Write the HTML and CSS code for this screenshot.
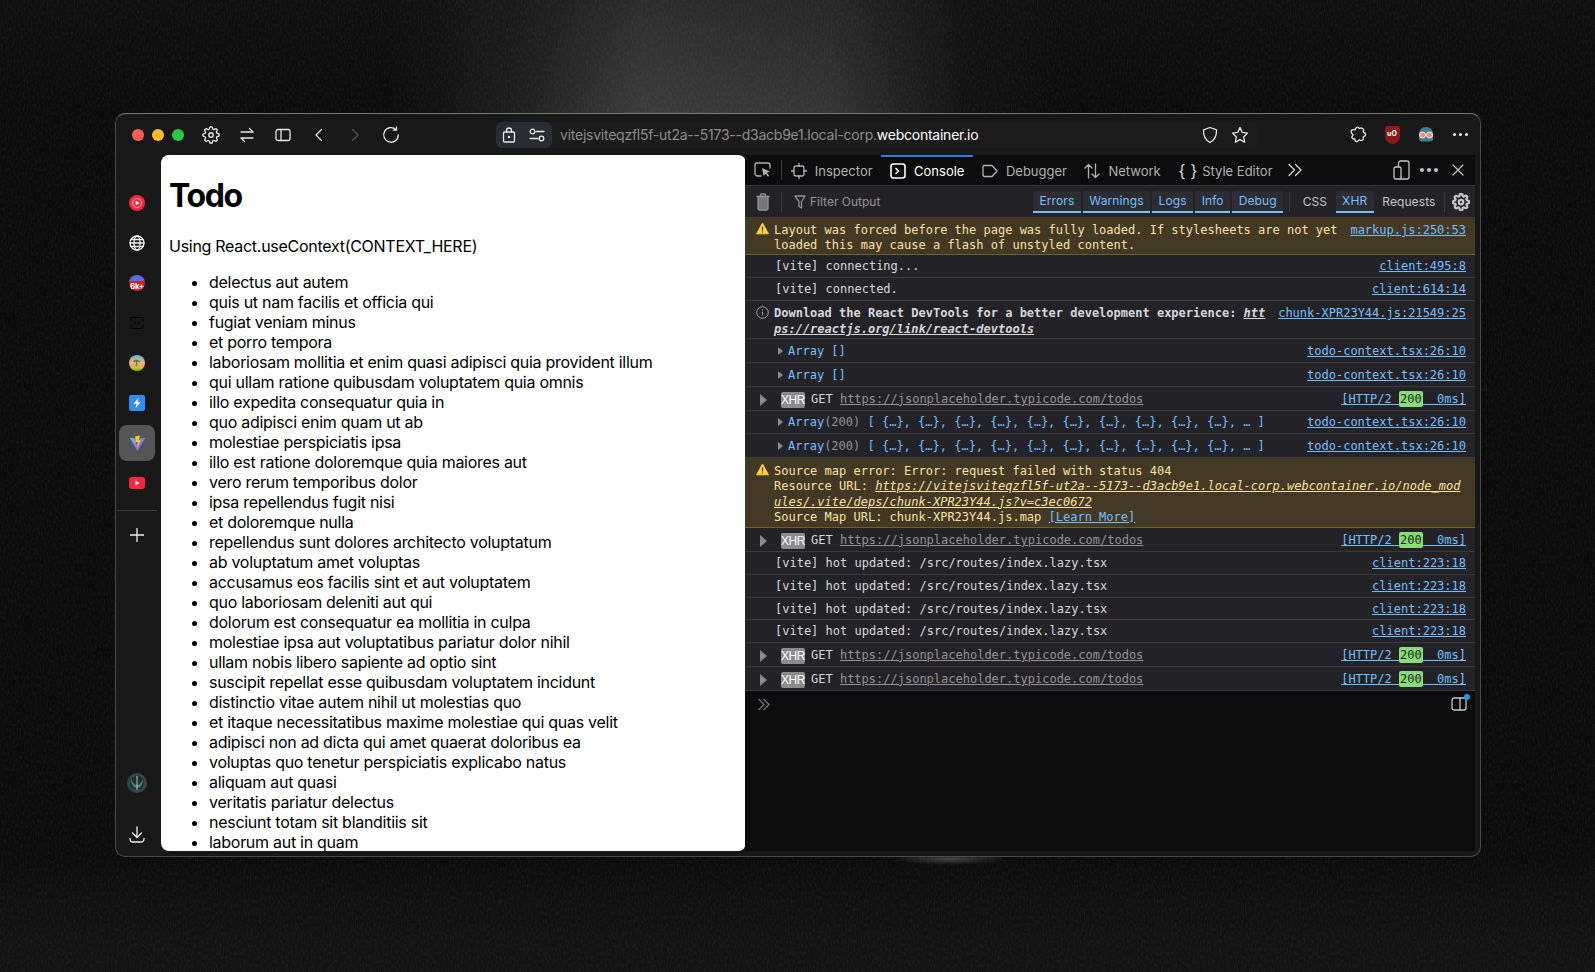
FILE: index.html
```html
<!DOCTYPE html>
<html lang="en">
<head>
    <meta charset="UTF-8">
    <title>Todo</title>
    <link rel="stylesheet" href="styles.css">
</head>
<body>
    <svg class="grain" width="1595" height="972" aria-hidden="true">
        <filter id="grain-noise">
            <feTurbulence type="fractalNoise" baseFrequency="0.7 0.25" numOctaves="2" seed="4"/>
            <feColorMatrix values="0 0 0 0 1  0 0 0 0 1  0 0 0 0 1  0 0 0 1.4 -0.55"/>
        </filter>
        <rect width="1595" height="972" filter="url(#grain-noise)"/>
    </svg>

    <svg class="sprite" width="0" height="0" aria-hidden="true">
        <symbol id="i-gear" viewBox="0 0 24 24"><circle cx="12" cy="12" r="3"/><path d="M19.4 15a1.65 1.65 0 0 0 .33 1.82l.06.06a2 2 0 0 1 0 2.83 2 2 0 0 1-2.83 0l-.06-.06a1.65 1.65 0 0 0-1.82-.33 1.65 1.65 0 0 0-1 1.51V21a2 2 0 0 1-2 2 2 2 0 0 1-2-2v-.09A1.65 1.65 0 0 0 9 19.4a1.65 1.65 0 0 0-1.82.33l-.06.06a2 2 0 0 1-2.83 0 2 2 0 0 1 0-2.83l.06-.06a1.65 1.65 0 0 0 .33-1.82 1.65 1.65 0 0 0-1.51-1H3a2 2 0 0 1-2-2 2 2 0 0 1 2-2h.09A1.65 1.65 0 0 0 4.6 9a1.65 1.65 0 0 0-.33-1.82l-.06-.06a2 2 0 0 1 0-2.83 2 2 0 0 1 2.83 0l.06.06a1.65 1.65 0 0 0 1.82.33H9a1.65 1.65 0 0 0 1-1.51V3a2 2 0 0 1 2-2 2 2 0 0 1 2 2v.09a1.65 1.65 0 0 0 1 1.51 1.65 1.65 0 0 0 1.82-.33l.06-.06a2 2 0 0 1 2.83 0 2 2 0 0 1 0 2.83l-.06.06a1.65 1.65 0 0 0-.33 1.82V9a1.65 1.65 0 0 0 1.51 1H21a2 2 0 0 1 2 2 2 2 0 0 1-2 2h-.09a1.65 1.65 0 0 0-1.51 1z"/></symbol>
        <symbol id="i-warn" viewBox="0 0 16 16"><path d="M8 1.2 15.4 14.6H.6z" fill="#ffd43b" stroke="#ffd43b" stroke-linejoin="round"/><path d="M8 5.5v5M8 11.8v1.2" stroke="#3a2f10" stroke-width="1.5"/></symbol>
    </svg>

    <div class="window">
        <header class="titlebar">
            <div class="lights">
                <span class="light light-red"></span>
                <span class="light light-yellow"></span>
                <span class="light light-green"></span>
            </div>
            <div class="nav-icons">
                <span class="nav-icon"><svg class="line gear-thin" width="18" height="18" viewBox="0 0 24 24"><use href="#i-gear"/></svg></span>
                <span class="nav-icon"><svg class="line" width="16" height="16" viewBox="0 0 16 16"><path d="M2 5h12M10.5 1.500 14 5M14 11H2M5.500 14.500 2 11"/></svg></span>
                <span class="nav-icon"><svg class="line" width="16" height="14" viewBox="0 0 16 14"><rect x="1" y="1.500" width="14" height="11" rx="2"/><path d="M6 1.500v11"/></svg></span>
                <span class="nav-icon"><svg class="line" width="10" height="14" viewBox="0 0 10 14"><path d="M7.500 1.500 2 7l5.500 5.500"/></svg></span>
                <span class="nav-icon nav-icon-off"><svg class="line" width="10" height="14" viewBox="0 0 10 14"><path d="M2.500 1.500 8 7l-5.500 5.500"/></svg></span>
                <span class="nav-icon"><svg class="line" width="18" height="18" viewBox="0 0 18 18"><path d="M14 3.600A7.300 7.300 0 1 0 16.300 9M14.500 1v3.200h-3.200"/></svg></span>
            </div>
            <div class="urlbar">
                <div class="url-pill">
                    <svg class="line" width="14" height="16" viewBox="0 0 14 16"><rect x="1.500" y="5" width="11" height="10" rx="1"/><path d="M4.500 5V3.500a2.500 2.500 0 0 1 5 0V5"/><circle cx="7" cy="10" r=".6"/></svg>
                    <svg class="line" width="16" height="14" viewBox="0 0 16 14"><circle cx="3.500" cy="3.500" r="2.300"/><path d="M7 3.500h8M1 10.500h8"/><circle cx="12.500" cy="10.500" r="2.300"/></svg>
                </div>
                <div class="url-text">vitejsviteqzfl5f-ut2a--5173--d3acb9e1.local-corp.<span class="url-domain">webcontainer.io</span></div>
                <svg class="line url-shield" width="16" height="18" viewBox="0 0 16 18"><path d="M8 1.500 14.500 3.800c.3 5.600-1.500 10-6.500 12.700C3 13.800 1.200 9.400 1.500 3.800z"/></svg>
                <svg class="line url-star" width="18" height="18" viewBox="0 0 18 18"><path d="m9 1.500 2.300 4.900 5.200.7-3.800 3.700.9 5.400L9 13.600l-4.600 2.600.9-5.400-3.800-3.700 5.200-.7z"/></svg>
            </div>
            <div class="ext-icons">
                <span class="ext-icon"><svg class="line" width="17" height="17" viewBox="0 0 17 17"><path d="M6.500 1.500c.9-.8 2.500-.2 2.700 1 1.500-.7 3.500-.2 4.300.9.300 1-.3 1.700-.3 2.500 1.300.5 2.300 1.500 2.300 2.700s-1.100 2-2.300 2.200c.2 1.200.2 2.600-.8 3.500-1.100.6-2.300.2-3.300-.5-.6 1.300-2.300 2.200-3.500 1.400-.7-.5-.6-1.500-.7-2.200-1.300.1-2.700-.4-3-1.500-.2-1 .5-1.700 1.200-2.500C1.500 7.600.7 6.200 1.300 4.800c.6-1.200 2.300-1.200 3.500-1z"/></svg></span>
                <span class="ext-icon">
                    <span class="ublock">uO</span>
                </span>
                <span class="ext-icon"><svg width="18" height="18" viewBox="0 0 18 18"><path d="M9 1c4.500 0 7 3.200 7 7v6l-2 1.500H4L2 14V8c0-3.800 2.500-7 7-7z" fill="#3f7f8f"/><circle cx="5.500" cy="9" r="3" fill="#f0907a" stroke="#f4f0e8"/><circle cx="12.500" cy="9" r="3" fill="#f0907a" stroke="#f4f0e8"/></svg></span>
                <span class="ext-icon"><span class="dots"><i></i><i></i><i></i></span></span>
            </div>
        </header>

        <div class="main">
            <nav class="sidebar">
                <span class="side-item"><svg width="16" height="16" viewBox="0 0 16 16"><circle cx="8" cy="8" r="8" fill="#f6263d"/><circle cx="8" cy="8" r="4.500" fill="none" stroke="#ffc4cb" stroke-width=".8"/><path d="M6.700 5.800 10.500 8l-3.800 2.200z" fill="#fff"/></svg></span>
                <span class="side-item"><svg class="line" width="16" height="16" viewBox="0 0 16 16"><circle cx="8" cy="8" r="7"/><ellipse cx="8" cy="8" rx="3" ry="7"/><path d="M1 8h14M2 4.500h12M2 11.500h12"/></svg></span>
                <span class="side-item"><span class="count-badge"><span class="count-text">6k+</span></span></span>
                <span class="side-item"><svg class="line line-black" width="16" height="14" viewBox="0 0 16 14"><path d="M2 5V3a1.500 1.500 0 0 1 1.500-1.500h9A1.500 1.500 0 0 1 14 3v2M2 9v2a1.500 1.500 0 0 0 1.500 1.500h9A1.500 1.500 0 0 0 14 11V9M6 5.500v3M10 5.500v3"/></svg></span>
                <span class="side-item"><svg width="16" height="16" viewBox="0 0 16 16"><defs><linearGradient id="beach" x1="0" y1="0" x2="0" y2="1"><stop offset="0" stop-color="#5fb8d8"/><stop offset=".5" stop-color="#f6b27a"/><stop offset=".72" stop-color="#f0a060"/><stop offset=".78" stop-color="#c8d020"/><stop offset="1" stop-color="#7fae10"/></linearGradient></defs><circle cx="8" cy="8" r="8" fill="url(#beach)"/><path d="M7.500 11V6M4.500 7c1.500-2 4.500-2 6.500 0" stroke="#3f8a3a" stroke-width="1.300" fill="none"/></svg></span>
                <span class="side-item"><svg width="16" height="16" viewBox="0 0 16 16"><rect width="16" height="16" rx="2" fill="#2f8cf5"/><path d="M9.500 2.500 4.500 9h3l-1 4.500 5-6.500h-3z" fill="#fff"/></svg></span>
                <span class="side-item side-item-active"><svg width="17" height="17" viewBox="0 0 18 18"><defs><linearGradient id="vite-v" x1="0" y1="0" x2="1" y2="1"><stop offset="0" stop-color="#41d1ff"/><stop offset="1" stop-color="#bd34fe"/></linearGradient></defs><path d="M.8 3 9 17 17.200 3 12 3.800 9 13 6 3.800z" fill="url(#vite-v)"/><path d="M6.500 1.500 11.500 .5l-.8 5 1.800-.4L8.500 14l.5-6.500-2 .4z" fill="#ffc517"/></svg></span>
                <span class="side-item"><svg width="16" height="12" viewBox="0 0 16 12"><rect width="16" height="12" rx="3" fill="#f6263d"/><path d="M6.500 3.500 10.500 6l-4 2.500z" fill="#fff"/></svg></span>
                <div class="side-rule"></div>
                <span class="side-item side-add"><svg class="line" width="14" height="14" viewBox="0 0 14 14"><path d="M7 0v14M0 7h14"/></svg></span>
                <span class="side-item side-user"><svg width="20" height="20" viewBox="0 0 20 20"><circle cx="10" cy="10" r="10" fill="#33474a"/><circle cx="10" cy="10" r="7" fill="#1f2f33"/><path d="M4 6c2 4 4 6 6 6s4-2 6-6c0 6-3 9-6 9s-6-3-6-9z" fill="#4d7f78"/><path d="M10 3v14" stroke="#b4c4c2"/></svg></span>
                <span class="side-item side-download"><svg class="line" width="16" height="18" viewBox="0 0 16 18"><path d="M8 1v10M3.500 7 8 11.500 12.500 7M1 12.500c0 2 1 3.500 3 3.500h8c2 0 3-1.500 3-3.500"/></svg></span>
            </nav>

            <section class="page">
                <h1>Todo</h1>
                <p>Using React.useContext(CONTEXT_HERE)</p>
                <ul>
                    <li>delectus aut autem</li>
                    <li>quis ut nam facilis et officia qui</li>
                    <li>fugiat veniam minus</li>
                    <li>et porro tempora</li>
                    <li>laboriosam mollitia et enim quasi adipisci quia provident illum</li>
                    <li>qui ullam ratione quibusdam voluptatem quia omnis</li>
                    <li>illo expedita consequatur quia in</li>
                    <li>quo adipisci enim quam ut ab</li>
                    <li>molestiae perspiciatis ipsa</li>
                    <li>illo est ratione doloremque quia maiores aut</li>
                    <li>vero rerum temporibus dolor</li>
                    <li>ipsa repellendus fugit nisi</li>
                    <li>et doloremque nulla</li>
                    <li>repellendus sunt dolores architecto voluptatum</li>
                    <li>ab voluptatum amet voluptas</li>
                    <li>accusamus eos facilis sint et aut voluptatem</li>
                    <li>quo laboriosam deleniti aut qui</li>
                    <li>dolorum est consequatur ea mollitia in culpa</li>
                    <li>molestiae ipsa aut voluptatibus pariatur dolor nihil</li>
                    <li>ullam nobis libero sapiente ad optio sint</li>
                    <li>suscipit repellat esse quibusdam voluptatem incidunt</li>
                    <li>distinctio vitae autem nihil ut molestias quo</li>
                    <li>et itaque necessitatibus maxime molestiae qui quas velit</li>
                    <li>adipisci non ad dicta qui amet quaerat doloribus ea</li>
                    <li>voluptas quo tenetur perspiciatis explicabo natus</li>
                    <li>aliquam aut quasi</li>
                    <li>veritatis pariatur delectus</li>
                    <li>nesciunt totam sit blanditiis sit</li>
                    <li>laborum aut in quam</li>
                </ul>
            </section>

            <section class="devtools">
                <div class="tabs">
                    <span class="tool-btn"><svg class="line" width="18" height="16" viewBox="0 0 18 16"><path d="M7 14H3a2 2 0 0 1-2-2V3a2 2 0 0 1 2-2h11a2 2 0 0 1 2 2v3"/><path class="fill" d="m8 6 8 3.500-3.200 1.200 2.400 3-1.300 1-2.300-3L9.500 14z"/></svg></span>
                    <span class="tool-sep"></span>
                    <span class="tab"><svg class="line" width="16" height="16" viewBox="0 0 16 16"><rect x="3" y="3" width="10" height="10" rx="2"/><path d="M8 0v3M8 13v3M0 8h3M13 8h3"/></svg>Inspector</span>
                    <span class="tab tab-active"><svg class="line line-bold" width="16" height="16" viewBox="0 0 16 16"><rect x="1" y="1" width="14" height="14" rx="2.500"/><path d="m6 5.500 2.500 2.500L6 10.500"/></svg>Console</span>
                    <span class="tab"><svg class="line" width="16" height="14" viewBox="0 0 16 14"><path d="M2.500 1.500h7.500L15 7l-5 5.500H2.500a1.500 1.500 0 0 1-1.500-1.500V3a1.500 1.500 0 0 1 1.500-1.500z"/></svg>Debugger</span>
                    <span class="tab"><svg class="line" width="16" height="16" viewBox="0 0 16 16"><path d="M4.500 15V1.500M1 5l3.500-3.500L8 5M11.500 1v13.500M8 11l3.500 3.500L15 11"/></svg>Network</span>
                    <span class="tab"><span class="braces">{ }</span>Style Editor</span>
                    <svg class="line tab-more" width="16" height="14" viewBox="0 0 16 14"><path d="m2 1.500 5.500 5.500L2 12.500M8.500 1.500 14 7l-5.500 5.500"/></svg>
                    <span class="tabs-right">
                        <svg class="line device-icon" width="17" height="20" viewBox="0 0 17 20"><rect x="5.500" y="1" width="10.500" height="18" rx="2"/><rect x="1" y="7" width="7" height="12" rx="1.500" fill="#0c0c0d"/></svg>
                        <span class="dots dots-dim"><i></i><i></i><i></i></span>
                        <svg class="line" width="12" height="12" viewBox="0 0 12 12"><path d="m1 1 10 10M11 1 1 11"/></svg>
                    </span>
                </div>

                <div class="filters">
                    <span class="tool-btn"><svg class="line" width="14" height="18" viewBox="0 0 14 18"><path d="M1 3.500h12M4.500 3.500V2a1 1 0 0 1 1-1h3a1 1 0 0 1 1 1v1.500"/><rect x="2" y="3.500" width="10" height="13.500" rx="1.500" fill="#77777b"/></svg></span>
                    <span class="tool-sep"></span>
                    <span class="filter-input"><svg class="line" width="12" height="14" viewBox="0 0 12 14"><path d="M1 1h10L7.500 6.500V13L5 11.500v-5z"/></svg>Filter Output</span>
                    <span class="filter-group">
                        <span class="pill pill-on">Errors</span>
                        <span class="pill pill-on">Warnings</span>
                        <span class="pill pill-on">Logs</span>
                        <span class="pill pill-on">Info</span>
                        <span class="pill pill-on">Debug</span>
                        <span class="tool-sep pill-sep"></span>
                        <span class="pill">CSS</span>
                        <span class="pill pill-on">XHR</span>
                        <span class="pill">Requests</span>
                        <span class="tool-sep"></span>
                        <svg class="gear" width="18" height="18" viewBox="0 0 24 24"><use href="#i-gear"/></svg>
                    </span>
                </div>

                <div class="log">
                    <div class="row row-warn">
                        <svg class="row-icon" width="13" height="13"><use href="#i-warn"/></svg>
                        <div class="msg">Layout was forced before the page was fully loaded. If stylesheets are not yet<br>loaded this may cause a flash of unstyled content.</div>
                        <a class="src">markup.js:250:53</a>
                    </div>
                    <div class="row"><div class="msg">[vite] connecting...</div><a class="src">client:495:8</a></div>
                    <div class="row"><div class="msg">[vite] connected.</div><a class="src">client:614:14</a></div>
                    <div class="row row-info">
                        <svg class="row-icon" width="13" height="13" viewBox="0 0 13 13"><circle cx="6.500" cy="6.500" r="5.800" fill="none" stroke="#a0a0a4"/><path d="M6.500 5.500v4M6.500 3.200v1.200" stroke="#a0a0a4"/></svg>
                        <div class="msg msg-strong">Download the React DevTools for a better development experience: <em>htt<br>ps://reactjs.org/link/react-devtools</em></div>
                        <a class="src">chunk-XPR23Y44.js:21549:25</a>
                    </div>
                    <div class="row row-tall"><div class="msg"><span class="tri"></span><span class="blue">Array []</span></div><a class="src">todo-context.tsx:26:10</a></div>
                    <div class="row row-tall"><div class="msg"><span class="tri"></span><span class="blue">Array []</span></div><a class="src">todo-context.tsx:26:10</a></div>
                    <div class="row row-tall row-xhr">
                        <span class="tri tri-big"></span><span class="xhr-badge">XHR</span><span class="msg">GET <a class="xhr-url">https://jsonplaceholder.typicode.com/todos</a></span>
                        <a class="src">[HTTP/2 <span class="ok">200</span>  0ms]</a>
                    </div>
                    <div class="row"><div class="msg"><span class="tri"></span><span class="blue">Array</span><span class="dim">(200)</span> <span class="blue">[ {…}, {…}, {…}, {…}, {…}, {…}, {…}, {…}, {…}, {…}, … ]</span></div><a class="src">todo-context.tsx:26:10</a></div>
                    <div class="row row-tall"><div class="msg"><span class="tri"></span><span class="blue">Array</span><span class="dim">(200)</span> <span class="blue">[ {…}, {…}, {…}, {…}, {…}, {…}, {…}, {…}, {…}, {…}, … ]</span></div><a class="src">todo-context.tsx:26:10</a></div>
                    <div class="row row-warn row-map">
                        <svg class="row-icon" width="13" height="13"><use href="#i-warn"/></svg>
                        <div class="msg">Source map error: Error: request failed with status 404<br>Resource URL: <em class="warn-link">https://vitejsviteqzfl5f-ut2a--5173--d3acb9e1.local-corp.webcontainer.io/node_mod<br>ules/.vite/deps/chunk-XPR23Y44.js?v=c3ec0672</em><br>Source Map URL: chunk-XPR23Y44.js.map <a class="learn">[Learn More]</a></div>
                    </div>
                    <div class="row row-tall row-xhr">
                        <span class="tri tri-big"></span><span class="xhr-badge">XHR</span><span class="msg">GET <a class="xhr-url">https://jsonplaceholder.typicode.com/todos</a></span>
                        <a class="src">[HTTP/2 <span class="ok">200</span>  0ms]</a>
                    </div>
                    <div class="row row-hot"><div class="msg">[vite] hot updated: /src/routes/index.lazy.tsx</div><a class="src">client:223:18</a></div>
                    <div class="row row-hot"><div class="msg">[vite] hot updated: /src/routes/index.lazy.tsx</div><a class="src">client:223:18</a></div>
                    <div class="row row-hot"><div class="msg">[vite] hot updated: /src/routes/index.lazy.tsx</div><a class="src">client:223:18</a></div>
                    <div class="row row-hot"><div class="msg">[vite] hot updated: /src/routes/index.lazy.tsx</div><a class="src">client:223:18</a></div>
                    <div class="row row-tall row-xhr">
                        <span class="tri tri-big"></span><span class="xhr-badge">XHR</span><span class="msg">GET <a class="xhr-url">https://jsonplaceholder.typicode.com/todos</a></span>
                        <a class="src">[HTTP/2 <span class="ok">200</span>  0ms]</a>
                    </div>
                    <div class="row row-tall row-xhr">
                        <span class="tri tri-big"></span><span class="xhr-badge">XHR</span><span class="msg">GET <a class="xhr-url">https://jsonplaceholder.typicode.com/todos</a></span>
                        <a class="src">[HTTP/2 <span class="ok">200</span>  0ms]</a>
                    </div>
                </div>

                <div class="prompt">
                    <svg class="line prompt-arrows" width="12" height="11" viewBox="0 0 12 11"><path d="m1 .5 5 5-5 5M6 .5l5 5-5 5"/></svg>
                    <span class="editor-toggle">
                        <svg class="line" width="16" height="14" viewBox="0 0 16 14"><rect x="1" y="1" width="14" height="12" rx="2"/><path d="M9 1v12"/></svg>
                        <span class="editor-dot"></span>
                    </span>
                </div>
            </section>
        </div>
    </div>
</body>
</html>
```

FILE: styles.css
```css
* {
    box-sizing: border-box;
}

html, body {
    height: 972px;
}

body {
    margin: 0;
    padding: 113px 114px 0 115px;
    overflow: hidden;
    position: relative;
    font-family: Inter, 'Noto Sans', sans-serif;
    background-color: #131313;
    background-image:
        radial-gradient(ellipse 56px 6px at 950px 859px, rgba(255, 255, 255, 0.22), transparent),
        linear-gradient(to bottom, rgba(19, 19, 19, 0.4), rgba(19, 19, 19, 0) 113px),
        linear-gradient(to right, rgba(255, 255, 255, 0) 390px, rgba(255, 255, 255, 0.08) 520px, rgba(255, 255, 255, 0.2) 640px, rgba(255, 255, 255, 0.17) 830px, rgba(255, 255, 255, 0.03) 960px, rgba(255, 255, 255, 0) 1060px),
        linear-gradient(to bottom, #0b0b0b 857px, #131313 940px);
    background-size: 100% 972px, 100% 114px, 100% 114px, 100% 972px;
    background-repeat: no-repeat;
}

.grain {
    position: absolute;
    top: 0;
    left: 0;
    opacity: 0.07;
}

.sprite {
    position: absolute;
}

.line {
    fill: none;
    stroke: currentColor;
    stroke-width: 1.3;
    stroke-linecap: round;
    stroke-linejoin: round;
    flex: none;
}

.line .fill {
    fill: currentColor;
    stroke: none;
}

.line-bold {
    stroke-width: 1.6;
}

.gear-thin {
    stroke-width: 1.8;
}

.line-black {
    color: #000;
    stroke-width: 1;
}

/* window */
.window {
    position: relative;
    width: 1366px;
    height: 744px;
    display: flex;
    flex-direction: column;
    background-color: #181818;
    border: 1px solid #4a4a4a;
    border-top-color: #777;
    border-radius: 10px;
    overflow: hidden;
}

.titlebar {
    height: 41px;
    flex: none;
    display: flex;
    align-items: center;
    color: #e8e8e8;
}

.lights {
    display: flex;
    gap: 8px;
    margin-left: 16px;
}

.light {
    width: 12px;
    height: 12px;
    border-radius: 50%;
}

.light-red { background-color: #ff5f57; }
.light-yellow { background-color: #febc2e; }
.light-green { background-color: #28c840; }

.nav-icons {
    display: flex;
    margin-left: 9px;
}

.nav-icon {
    width: 36px;
    height: 26px;
    display: flex;
    align-items: center;
    justify-content: center;
}

.nav-icon-off {
    color: #555;
}

.urlbar {
    width: 762px;
    height: 26px;
    margin-left: 87px;
    display: flex;
    align-items: center;
    background-color: #1b1b1b;
    border-radius: 6px;
    font-size: 14px;
}

.url-pill {
    width: 56px;
    height: 26px;
    display: flex;
    align-items: center;
    gap: 13px;
    padding-left: 6px;
    background-color: #2a2c33;
    border-radius: 6px;
    flex: none;
}

.url-text {
    margin-left: 8px;
    color: #8b8b8b;
    white-space: nowrap;
    letter-spacing: -0.24px;
}

.url-domain {
    color: #fff;
}

.url-shield {
    margin-left: auto;
}

.url-star {
    margin: 0 9px 0 13px;
}

.ext-icons {
    display: flex;
    margin-left: 83px;
}

.ext-icon {
    width: 34px;
    height: 26px;
    display: flex;
    align-items: center;
    justify-content: center;
}

.ublock {
    width: 15px;
    height: 18px;
    background-color: #8a1a1a;
    color: #fff;
    font-size: 7px;
    font-weight: 700;
    text-align: center;
    line-height: 15px;
    border-radius: 2px 2px 8px 8px;
}

.dots {
    display: flex;
    gap: 3px;
}

.dots i {
    width: 3px;
    height: 3px;
    border-radius: 50%;
    background-color: #eee;
}

.dots-dim i {
    width: 4px;
    height: 4px;
    background-color: #c4c4c8;
}

/* sidebar */
.main {
    flex: 1;
    display: flex;
    min-height: 0;
    padding-bottom: 5px;
}

.sidebar {
    width: 45px;
    flex: none;
    display: flex;
    flex-direction: column;
    padding: 30px 6px 0 3px;
    gap: 4px;
    color: #f0f0f0;
}

.side-item {
    width: 36px;
    height: 36px;
    flex: none;
    display: flex;
    align-items: center;
    justify-content: center;
    border-radius: 8px;
}

.side-item-active {
    background-color: #555;
}

.side-rule {
    height: 1px;
    margin: 5px -2px 2px;
    background-color: #3a3a3a;
    flex: none;
}

.side-user {
    margin-top: auto;
}

.side-download {
    margin-top: 10px;
}

.side-download svg {
    margin-top: 3px;
}

.count-badge {
    width: 16px;
    height: 16px;
    border-radius: 50%;
    background: linear-gradient(to bottom, #4f6ff0 40%, #d91c1c 40%);
    display: flex;
    align-items: flex-end;
    justify-content: center;
    overflow: hidden;
}

.count-text {
    color: #fff;
    font-size: 8px;
    font-weight: 700;
    line-height: 10px;
    letter-spacing: -0.2px;
}

/* left page */
.page {
    width: 585px;
    flex: none;
    background-color: #fff;
    color: #000;
    padding: 1px 8px 0;
    border-radius: 8px;
    overflow: hidden;
    font-size: 16px;
    line-height: 20px;
    letter-spacing: -0.28px;
}

.page h1 {
    margin: 21.44px 0;
    font-size: 32px;
    line-height: 37px;
    font-weight: 700;
    letter-spacing: -1.4px;
}

.page p {
    margin: 16px 0;
}

.page ul {
    margin: 0;
    padding-left: 40px;
}

/* devtools */
.devtools {
    width: 730px;
    flex: none;
    display: flex;
    flex-direction: column;
    margin-left: -1px;
    background-color: #0c0c0d;
    color: #b1b1b3;
    font-size: 13px;
}

.tabs {
    height: 31px;
    flex: none;
    display: flex;
    align-items: center;
    border-bottom: 1px solid #38383d;
}

.tool-btn {
    width: 36px;
    display: flex;
    justify-content: center;
    flex: none;
}

.tool-sep {
    width: 1px;
    height: 20px;
    background-color: #38383d;
    flex: none;
}

.tab {
    height: 30px;
    display: flex;
    align-items: center;
    gap: 8px;
    padding: 0 8.75px;
    border-top: 2px solid transparent;
    flex: none;
}

.tab-active {
    color: #fff;
    border-top-color: #2a7de1;
}

.braces {
    width: 16px;
    font-size: 17px;
    text-align: center;
    white-space: nowrap;
    color: #d7d7db;
}

.tab-more {
    margin-left: 6px;
    color: #d7d7db;
}

.tabs-right {
    margin-left: auto;
    display: flex;
    align-items: center;
    gap: 14px;
    padding-right: 11px;
    color: #c4c4c8;
}

.device-icon {
    margin-right: -4px;
}

.filters {
    height: 31px;
    flex: none;
    display: flex;
    align-items: center;
    background-color: #232327;
    font-size: 12px;
    color: #939395;
}

.filter-input {
    display: flex;
    align-items: center;
    gap: 4px;
    margin-left: 12px;
    flex: 1;
}

.filter-group {
    display: flex;
    align-items: center;
    gap: 2px;
    color: #c4c4c8;
    padding-right: 5px;
    letter-spacing: 0.1px;
}

.pill {
    height: 22px;
    padding: 0 6.5px;
    display: flex;
    align-items: center;
    border-radius: 3px 3px 0 0;
}

.pill-on {
    color: #75bfff;
    background-color: #2c2c32;
    border-bottom: 2px solid #75bfff;
}

.pill-sep {
    margin: 0 4px;
}

.gear {
    fill: none;
    stroke: #c4c4c8;
    stroke-width: 3;
    margin-left: 5px;
}

/* console rows */
.log {
    font-family: 'DejaVu Sans Mono', 'Liberation Mono', monospace;
    font-size: 12px;
    line-height: 15.3px;
    color: #d7d7db;
}

.row {
    display: flex;
    align-items: center;
    height: 23px;
    padding: 2px 9px 0 30px;
    background-color: #232327;
    border-bottom: 1px solid #38383d;
    position: relative;
    white-space: pre;
}

.row-tall {
    height: 24px;
}

.row-hot {
    height: 22.75px;
}

.row-warn {
    align-items: flex-start;
    height: 38px;
    padding: 6px 9px 0 29px;
    background-color: #423824;
    border-bottom-color: #6a5f2e;
    color: #fce2a1;
}

.row-map {
    height: 70px;
}

.row-info {
    align-items: flex-start;
    height: 38px;
    padding: 4px 9px 0 29px;
    line-height: 16px;
}

.row-icon {
    position: absolute;
    left: 11px;
    top: 5px;
}

.msg {
    flex: none;
}

.msg-strong {
    font-weight: 700;
}

.msg-strong em {
    text-decoration: underline;
}

.tri {
    display: inline-block;
    width: 0;
    height: 0;
    margin: 0 5px 0 3px;
    border-left: 5px solid #8a8a8e;
    border-top: 4px solid transparent;
    border-bottom: 4px solid transparent;
}

.tri-big {
    position: absolute;
    left: 15px;
    margin: 0;
    border-left-width: 7px;
    border-top-width: 6px;
    border-bottom-width: 6px;
}

.row-xhr {
    padding-left: 36px;
}

.xhr-badge {
    width: 24px;
    height: 16px;
    margin-right: 6px;
    border-radius: 2px;
    background-color: #8c8c8c;
    color: #fff;
    font-family: 'Liberation Sans', sans-serif;
    font-size: 12px;
    line-height: 16px;
    text-align: center;
    flex: none;
    letter-spacing: -0.5px;
}

.xhr-url {
    color: #939395;
    text-decoration: underline;
}

.blue {
    color: #75bfff;
}

.dim {
    color: #939395;
}

.src {
    margin-left: auto;
    color: #75bfff;
    text-decoration: underline;
    flex: none;
}

.ok {
    display: inline-block;
    height: 16px;
    line-height: 16px;
    padding: 0 1px;
    background-color: #86de74;
    color: #1b2a18;
    border-radius: 2px;
}

.warn-link {
    text-decoration: underline;
}

.learn {
    color: #75bfff;
    text-decoration: underline;
}

.prompt {
    flex: 1;
    display: flex;
    align-items: flex-start;
    padding: 7px 8px 0 13px;
    color: #77777b;
}

.prompt-arrows {
    margin-top: 1px;
}

.editor-toggle {
    position: relative;
    margin-left: auto;
    color: #c4c4c8;
    margin-top: -1px;
}

.editor-dot {
    position: absolute;
    top: -3px;
    right: -3px;
    width: 6px;
    height: 6px;
    border-radius: 50%;
    background-color: #1d9bf0;
}
```
